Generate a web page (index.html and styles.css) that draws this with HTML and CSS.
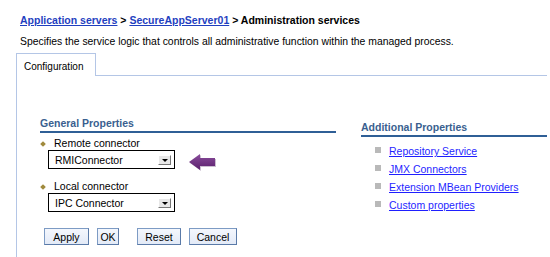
FILE: index.html
```html
<!DOCTYPE html>
<html lang="en">
<head>
    <meta charset="UTF-8">
    <title>Administration services</title>
    <link rel="stylesheet" href="styles.css">
</head>
<body>
    <div class="crumbs">
        <a href="#">Application servers</a> &gt; <a href="#">SecureAppServer01</a> &gt; Administration services
    </div>
    <p class="desc">Specifies the service logic that controls all administrative function within the managed process.</p>

    <div class="tabs">
        <div class="tab">Configuration</div>
        <div class="tab-rest"></div>
    </div>

    <div class="panel">
        <div class="col-left">
            <h2>General Properties</h2>

            <div class="field">
                <div class="label"><span class="req"></span>Remote connector</div>
                <div class="row">
                    <div class="select">
                        <span>RMIConnector</span>
                        <span class="drop"></span>
                    </div>
                    <svg class="pointer" width="30" height="18" viewBox="0 0 30 18">
                        <defs>
                            <linearGradient id="pg" x1="0" y1="0" x2="0" y2="1">
                                <stop offset="0" stop-color="#8a4d9c"/>
                                <stop offset="1" stop-color="#5a1f6c"/>
                            </linearGradient>
                        </defs>
                        <polygon points="1,8 12,0 12,4 27,4 27,12 12,12 12,16" fill="#cbbfd0" transform="translate(1,1)"/>
                        <polygon points="1,8 12,0 12,4 27,4 27,12 12,12 12,16" fill="url(#pg)"/>
                    </svg>
                </div>
            </div>

            <div class="field">
                <div class="label"><span class="req"></span>Local connector</div>
                <div class="row">
                    <div class="select">
                        <span>IPC Connector</span>
                        <span class="drop"></span>
                    </div>
                </div>
            </div>

            <div class="buttons">
                <button class="btn-apply">Apply</button>
                <button class="btn-ok">OK</button>
                <button class="btn-reset">Reset</button>
                <button class="btn-cancel">Cancel</button>
            </div>
        </div>

        <div class="col-right">
            <h2>Additional Properties</h2>
            <ul class="links">
                <li><a href="#">Repository Service</a></li>
                <li><a href="#">JMX Connectors</a></li>
                <li><a href="#">Extension MBean Providers</a></li>
                <li><a href="#">Custom properties</a></li>
            </ul>
        </div>
    </div>
</body>
</html>
```

FILE: styles.css
```css
body {
    margin: 0;
    padding: 0;
    background-color: white;
    font-family: "Liberation Sans", Arial, sans-serif;
    font-size: 10px;
    color: #000;
    width: 550px;
    height: 257px;
    overflow: hidden;
}
a {
    color: #1f1fff;
}
.crumbs {
    padding: 14px 0 0 20px;
    font-size: 10.5px;
    font-weight: bold;
    line-height: 13px;
}
.crumbs a {
    color: #1f3fbf;
}
.desc {
    margin: 8px 0 0 20px;
    line-height: 13px;
    font-size: 10.4px;
}
.tabs {
    display: flex;
    margin: 5px 0 0 16px;
    height: 23px;
}
.tab {
    width: 80px;
    border: 1px solid #b4c6e6;
    border-bottom: none;
    padding: 7px 0 0 7px;
    box-sizing: border-box;
    font-size: 10px;
}
.tab-rest {
    flex: 1;
    border-bottom: 1px solid #b4c6e6;
    margin-right: 3px;
}
.panel {
    display: flex;
    margin-left: 16px;
    border-left: 1px solid #b4c6e6;
    height: 182px;
}
.col-left {
    width: 296px;
    margin-left: 23px;
    padding-top: 41px;
}
.col-right {
    width: 186px;
    margin-left: 25px;
    padding-top: 45px;
}
h2 {
    margin: 0;
    font-size: 10.5px;
    font-weight: bold;
    color: #3a5f8f;
    line-height: 13px;
    padding-bottom: 1px;
    border-bottom: 2px solid #2f5f96;
}
.field {
    margin-top: 4px;
}
.field + .field {
    margin-top: 8px;
}
.label {
    display: flex;
    align-items: center;
    line-height: 13px;
    font-size: 10.5px;
}
.req {
    width: 4px;
    height: 4px;
    margin: 0 9px 0 1px;
    background-color: #a08a3c;
    transform: rotate(45deg);
}
.row {
    display: flex;
    align-items: flex-start;
    margin-top: 0;
}
.select {
    width: 127px;
    height: 19px;
    margin-left: 8px;
    border: 1px solid #000;
    box-sizing: border-box;
    display: flex;
    align-items: center;
    justify-content: space-between;
    padding: 0 3px 0 6px;
    font-size: 10.5px;
}
.drop {
    width: 11px;
    height: 8px;
    background-color: #e8e8e8;
    border-right: 1px solid #777;
    border-bottom: 1px solid #777;
    border-top: 1px solid #fff;
    border-left: 1px solid #fff;
    position: relative;
}
.drop::after {
    content: "";
    position: absolute;
    left: 3px;
    top: 3px;
    border-left: 3px solid transparent;
    border-right: 3px solid transparent;
    border-top: 3px solid #000;
}
.pointer {
    margin: 4px 0 0 13px;
}
.buttons {
    display: flex;
    margin: 16px 0 0 4px;
}
button {
    font-family: "Liberation Sans", Arial, sans-serif;
    font-size: 10.5px;
    height: 17px;
    padding: 0;
    background: linear-gradient(#f4f7fd, #e3eaf7);
    border: 1px solid #7d9bc4;
    border-right-color: #5a7aa8;
    border-bottom-color: #5a7aa8;
    color: #000;
}
.btn-apply {
    width: 45px;
}
.btn-ok {
    width: 22px;
    margin-left: 8px;
}
.btn-reset {
    width: 44px;
    margin-left: 18px;
}
.btn-cancel {
    width: 48px;
    margin-left: 8px;
}
.links {
    list-style: none;
    margin: 5px 0 0 0;
    padding: 0;
}
.links li {
    display: flex;
    align-items: center;
    height: 18px;
    font-size: 10.5px;
}
.links li::before {
    content: "";
    width: 6px;
    height: 6px;
    background-color: #b9b9b9;
    margin: 0 8px 2px 14px;
}
```
